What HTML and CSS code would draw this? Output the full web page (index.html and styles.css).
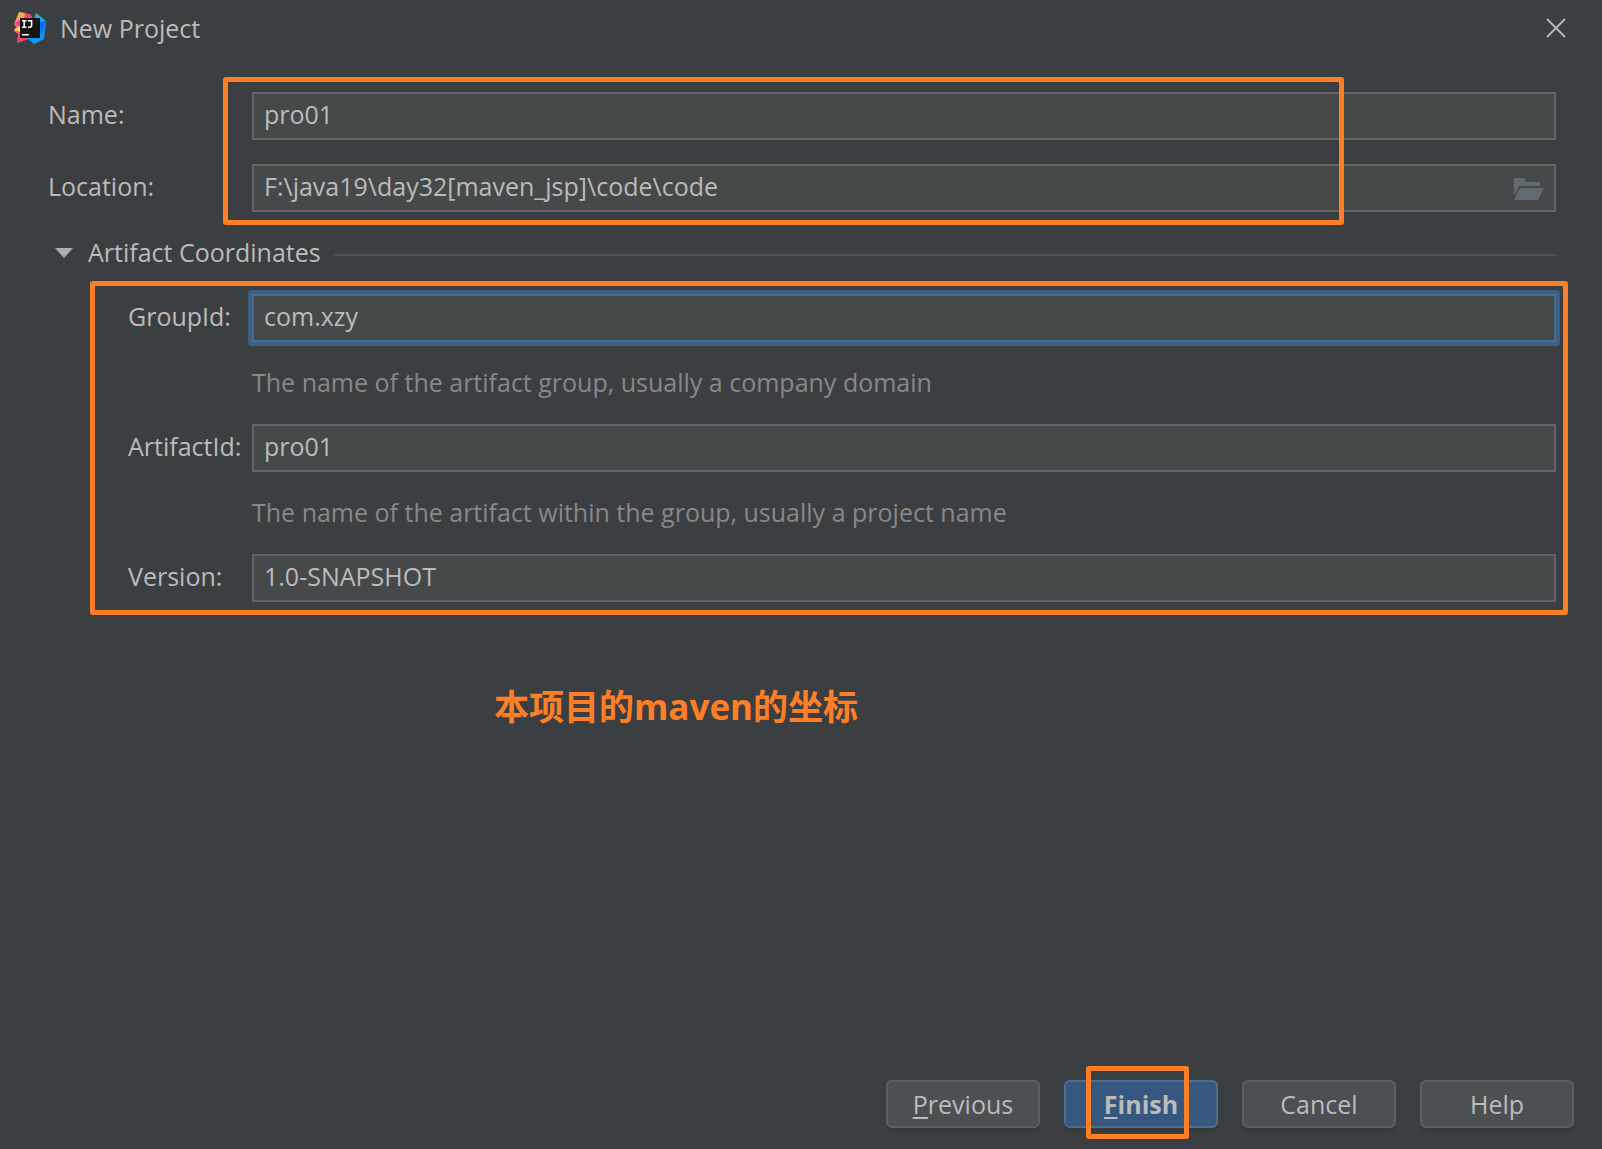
FILE: index.html
```html
<!DOCTYPE html>
<html lang="en">
<head>
<meta charset="utf-8">
<title>New Project</title>
<meta name="viewport" content="width=device-width, initial-scale=1">
<link rel="stylesheet" href="styles.css">
</head>
<body>
<header class="titlebar">
  <svg class="logo" viewBox="0 0 32 32" aria-hidden="true">
    <defs>
      <linearGradient id="warm" x1="0" y1="0" x2="0" y2="1">
        <stop offset="0" stop-color="#fcb84b"/>
        <stop offset="0.5" stop-color="#fb6a55"/>
        <stop offset="1" stop-color="#e332b8"/>
      </linearGradient>
      <linearGradient id="cool" x1="0" y1="0" x2="0" y2="1">
        <stop offset="0" stop-color="#12c6f2"/>
        <stop offset="0.5" stop-color="#1585f2"/>
        <stop offset="1" stop-color="#0aa0f5"/>
      </linearGradient>
    </defs>
    <path fill="#f93d76" d="M9 1 16 2 20 8 8 14Z"/>
    <path fill="url(#warm)" d="M5 0 11 1 8 24 3 31 4 22 0 19 2 15 0 12Z"/>
    <path fill="#fbe24d" d="M0 18 6 14 6 20Z"/>
    <path fill="#e83ac9" d="M0 12 6 8 6 14Z"/>
    <path fill="#f6456f" d="M3 31 6 20 18 26Z"/>
    <path fill="url(#cool)" d="M22 1 32 9 30 27 20 32 13 26 26 24 20 8Z"/>
    <path fill="#0d6cf0" d="M26 10 32 9 27 22Z"/>
    <path fill="#17130f" d="M6 6h20v20H6z"/>
    <path fill="none" stroke="#fff" stroke-width="1.6" d="M8 8.7h4.5M10.2 8.7v6.6M8 15.3h4.5M14 8.7h3.6v4.6q0 2-2 2h-1.6M8 22.7h7"/>
  </svg>
  <h1 class="title">New Project</h1>
  <button class="close" type="button" aria-label="Close">
    <svg viewBox="0 0 20 20" aria-hidden="true"><path d="M1 1 19 19M19 1 1 19"/></svg>
  </button>
</header>

<form class="dialog">
  <main class="content">
    <div class="fields basics">
      <label for="name">Name:</label>
      <input class="field" id="name" type="text" value="pro01">
      <label for="location">Location:</label>
      <div class="field path">
        <input class="path-input" id="location" type="text" value="F:\java19\day32[maven_jsp]\code\code">
        <button class="browse" type="button" aria-label="Browse">
          <svg viewBox="0 0 30 22" aria-hidden="true"><path d="M0 0h10l2 4h14v4H5L0 18ZM6 10h24l-6 12H0Z"/></svg>
        </button>
      </div>
      <div class="mark mark-basics"></div>
    </div>

    <details class="section" open>
      <summary class="section-head">
        <svg class="arrow" viewBox="0 0 18 10" aria-hidden="true"><path d="M0 0h18L9 10Z"/></svg>
        <span class="section-title">Artifact Coordinates</span>
        <span class="rule"></span>
      </summary>
      <div class="fields coordinates">
        <label for="group">GroupId:</label>
        <input class="field focused" id="group" type="text" value="com.xzy">
        <p class="hint">The name of the artifact group, usually a company domain</p>
        <label for="artifact">ArtifactId:</label>
        <input class="field" id="artifact" type="text" value="pro01">
        <p class="hint">The name of the artifact within the group, usually a project name</p>
        <label for="version">Version:</label>
        <input class="field" id="version" type="text" value="1.0-SNAPSHOT">
        <div class="mark mark-coordinates"></div>
      </div>
    </details>

    <p class="note" lang="zh-CN">本项目的maven的坐标</p>
  </main>

  <footer class="actions">
    <button class="button" type="button"><span><u>P</u>revious</span></button>
    <div class="primary-wrap">
      <button class="button primary" type="submit"><span><u>F</u>inish</span></button>
      <div class="mark mark-finish"></div>
    </div>
    <button class="button" type="button">Cancel</button>
    <button class="button" type="button">Help</button>
  </footer>
</form>
</body>
</html>
```
FILE: styles.css
```css
* {
  box-sizing: border-box;
}

body {
  display: flex;
  flex-direction: column;
  min-height: 100vh;
  margin: 0;
  background: #3c3f41;
  color: #bbbbbb;
  font-family: "Open Sans", "Noto Sans", "Noto Sans CJK SC", sans-serif;
  font-size: 25px;
  line-height: 36px;
}

input,
button {
  margin: 0;
  color: inherit;
  font: inherit;
}

.titlebar {
  display: flex;
  align-items: center;
  height: 56px;
  padding: 0 24px 0 14px;
}

.logo {
  width: 32px;
  height: 32px;
}

.title {
  flex: 1;
  margin: 0 0 0 14px;
  font-size: 25px;
  font-weight: 400;
}

.close {
  display: flex;
  padding: 12px;
  border: 0;
  background: none;
}

.close svg {
  width: 20px;
  height: 20px;
  fill: none;
  stroke: #b4b5b6;
  stroke-width: 2;
}

.dialog {
  display: flex;
  flex: 1;
  flex-direction: column;
}

.content {
  flex: 1;
  padding: 36px 46px 0 48px;
}

.fields {
  position: relative;
  display: grid;
  align-items: center;
}

.fields label {
  padding-bottom: 4px;
}

.basics {
  grid-template-columns: 204px 1fr;
  row-gap: 24px;
}

.field {
  width: 100%;
  height: 48px;
  padding: 0 10px 4px;
  border: 2px solid #646464;
  border-radius: 0;
  outline: 0;
  background: #45494a;
}

.focused {
  border-color: #466d94;
  border-radius: 1px;
  box-shadow: 0 0 0 4px #3d6185;
}

.path {
  display: flex;
  align-items: center;
}

.path-input {
  flex: 1;
  min-width: 0;
  padding: 0;
  border: 0;
  outline: 0;
  background: none;
}

.browse {
  display: flex;
  padding: 6px 0 0;
  border: 0;
  background: none;
}

.browse svg {
  width: 30px;
  height: 22px;
  fill: #626b70;
}

.section {
  margin-top: 24px;
}

.section-head {
  display: flex;
  align-items: center;
  height: 38px;
  padding-left: 7px;
  list-style: none;
}

.arrow {
  width: 18px;
  height: 10px;
  margin-bottom: 4px;
  fill: #adadad;
}

.section-title {
  margin: 0 12px 0 15px;
  padding-bottom: 6px;
}

.rule {
  flex: 1;
  height: 2px;
  background: #515151;
}

.coordinates {
  grid-template-columns: 124px 1fr;
  margin: 20px 0 0 80px;
}

.hint {
  grid-column: 2;
  margin: 0;
  padding-bottom: 2px;
  color: #888888;
  line-height: 80px;
}

.note {
  margin: 81px 0 0 446px;
  color: #ff7f27;
  font-size: 35px;
  font-weight: 700;
  line-height: 48px;
}

.actions {
  display: flex;
  justify-content: flex-end;
  gap: 24px;
  padding: 0 28px 21px;
}

.button {
  width: 154px;
  height: 48px;
  padding: 0;
  border: 2px solid #5e6060;
  border-radius: 6px;
  background: #4c5052;
  box-shadow: 0 4px 0 #37393b;
}

.button u {
  text-decoration-thickness: 2px;
  text-underline-offset: 3px;
  text-decoration-skip-ink: none;
}

.primary {
  border-color: #4c708c;
  background: #365880;
  font-weight: 700;
}

.primary-wrap {
  position: relative;
}

/* Highlight frames drawn over the form */
.mark {
  position: absolute;
  border: 5px solid #ff7f27;
  border-radius: 3px;
  pointer-events: none;
}

.mark-basics {
  inset: -15px 212px -13px 175px;
}

.mark-coordinates {
  inset: -13px -12px -13px -38px;
}

.mark-finish {
  inset: -14px 29px -11px 22px;
}
```
